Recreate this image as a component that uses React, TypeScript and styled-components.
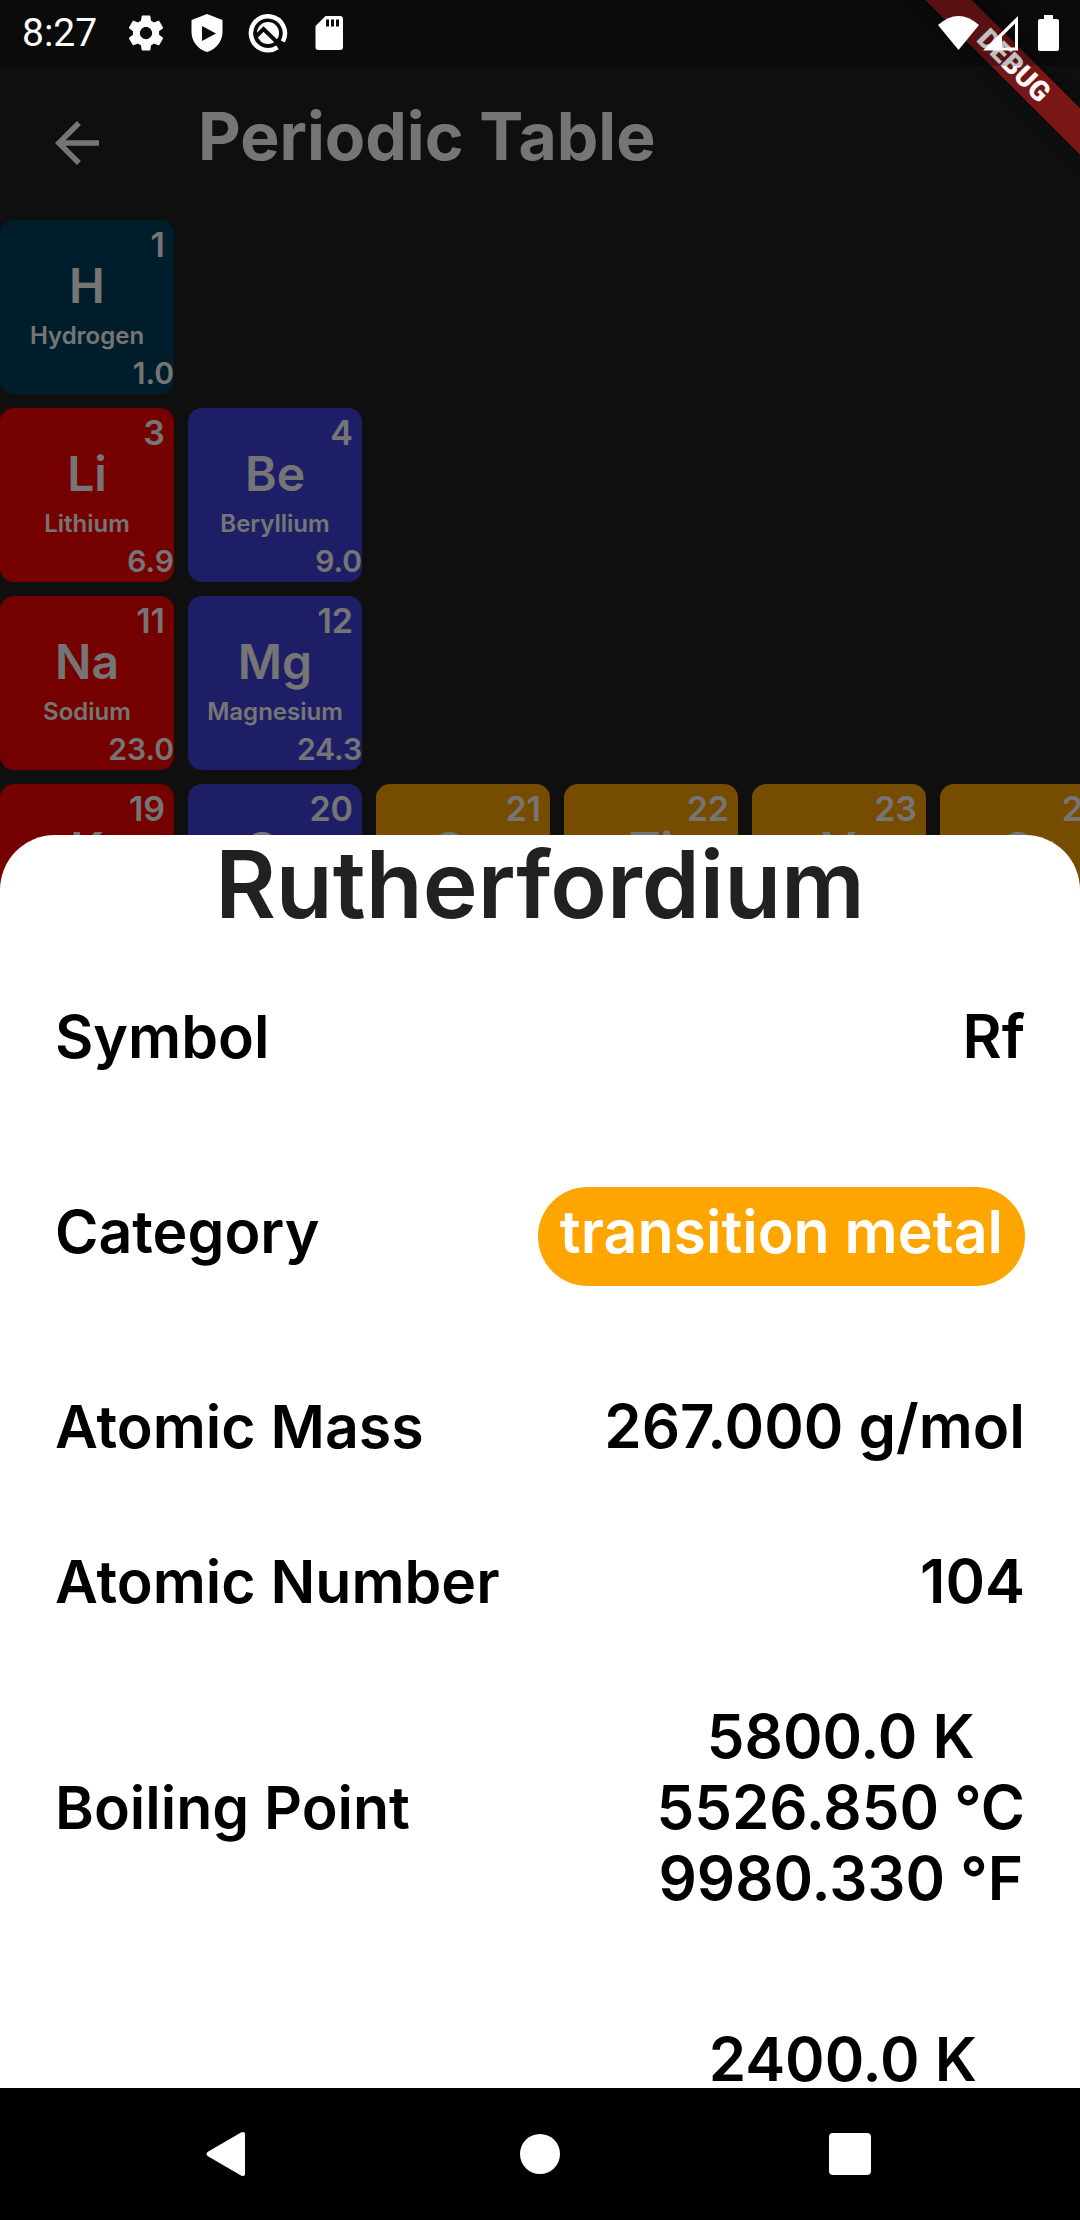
import React from "react";
import styled, { createGlobalStyle } from "styled-components";

const GlobalStyle = createGlobalStyle`
  *, *::before, *::after { box-sizing: border-box; }
  body { margin: 0; background: #000; }
  button { margin: 0; padding: 0; border: 0; background: none; color: inherit; font: inherit; cursor: pointer; }
`;

const Screen = styled.div`
  position: relative;
  display: flex;
  flex-direction: column;
  height: 100vh;
  overflow: hidden;
  background: #212121;
  color: #fff;
  font-family: Inter, "Liberation Sans", sans-serif;
  font-weight: 600;
`;

const Body = styled.main`
  position: relative;
  flex: 1;
  min-height: 0;
  padding-top: 66px;
  overflow: hidden;
`;

const AppBar = styled.header`
  display: flex;
  align-items: center;
  gap: 88px;
  height: 154px;
  padding: 0 44px;
`;

const BackButton = styled.button`
  display: flex;
  width: 66px;
  height: 66px;
`;

const PageTitle = styled.h1`
  margin: 0;
  padding-bottom: 14px;
  font-size: 66px;
  font-weight: 700;
  line-height: 80px;
  white-space: nowrap;
`;

const Table = styled.div`
  display: grid;
  grid-template-columns: repeat(6, 174px);
  grid-auto-rows: 174px;
  gap: 14px;
`;

const Tile = styled.button<{ $row: number; $col: number; $color: string }>`
  grid-row: ${(p) => p.$row};
  grid-column: ${(p) => p.$col};
  display: flex;
  flex-direction: column;
  align-items: center;
  padding-top: 8px;
  border-radius: 14px;
  background: ${(p) => p.$color};
`;

const TileNumber = styled.span`
  align-self: flex-end;
  padding-right: 9px;
  font-size: 34px;
  line-height: 34px;
`;

const TileSymbol = styled.span`
  font-size: 48px;
  line-height: 48px;
`;

const TileName = styled.span`
  margin-top: 11px;
  font-size: 24px;
  line-height: 30px;
`;

const TileMass = styled.span`
  align-self: flex-end;
  margin-top: 7px;
  font-size: 30px;
  line-height: 30px;
`;

const Scrim = styled.div`
  position: absolute;
  inset: 0;
  background: rgba(0, 0, 0, 0.54);
`;

const Sheet = styled.section`
  position: absolute;
  right: 0;
  bottom: 0;
  left: 0;
  height: 60%;
  overflow-y: auto;
  scrollbar-width: none;
  border-radius: 55px 55px 0 0;
  background: #fff;
  color: #000;
`;

const SheetTitle = styled.h2`
  margin: 0 0 68px;
  color: #212121;
  font-size: 93px;
  font-weight: 600;
  line-height: 98px;
  text-align: center;
`;

const Facts = styled.dl`
  display: flex;
  flex-direction: column;
  gap: 84px;
  margin: 0;
  padding: 0 55px 84px;
  font-size: 59px;
  line-height: 71px;
`;

const Fact = styled.div<{ $kind?: "badge" | "multi" }>`
  display: flex;
  align-items: ${(p) => (p.$kind === "badge" ? "baseline" : "center")};
  justify-content: space-between;
  padding: ${(p) => (p.$kind === "badge" ? "31px 0 21px" : p.$kind === "multi" ? "0 0 26px" : "0")};
`;

const FactName = styled.dt`
  white-space: nowrap;
`;

const FactValue = styled.dd`
  margin: 0;
  font-size: 60px;
  text-align: center;
  white-space: pre-line;
`;

const Badge = styled.dd`
  margin: 0;
  padding: 9px 22px 19px;
  border-radius: 50px;
  background: #ffa500;
  color: #fff;
  white-space: nowrap;
`;

const DebugRibbon = styled.div`
  position: absolute;
  top: 49px;
  right: -54px;
  width: 240px;
  height: 33px;
  transform: rotate(45deg);
  background: rgba(183, 28, 28, 0.63);
  box-shadow: 0 0 16px rgba(0, 0, 0, 0.5);
  font-family: Roboto, sans-serif;
  font-size: 28px;
  font-weight: 900;
  line-height: 33px;
  text-align: center;
`;

const StatusBar = styled.div`
  position: absolute;
  top: 0;
  right: 0;
  left: 0;
  display: flex;
  align-items: center;
  justify-content: space-between;
  height: 66px;
  padding: 0 21px 0 22px;
  background: rgba(0, 0, 0, 0.25);
`;

const StatusGroup = styled.div<{ $gap: number }>`
  display: flex;
  align-items: center;
  gap: ${(p) => p.$gap}px;
`;

const Clock = styled.time`
  width: 84px;
  font-family: Roboto, sans-serif;
  font-size: 39px;
  font-weight: 400;
  line-height: 44px;
`;

const NavBar = styled.nav`
  display: grid;
  grid-template-columns: repeat(3, 1fr);
  height: 132px;
  padding: 0 75px;
  background: #000;
`;

const NavButton = styled.button`
  display: flex;
  align-items: center;
  justify-content: center;
`;

const RED = "#ff0000";
const BLUE = "#4343e0";
const ORANGE = "#ffa500";

type ElementInfo = {
  row: number;
  col: number;
  number: number;
  symbol: string;
  name?: string;
  mass?: string;
  color: string;
};

const elements: ElementInfo[] = [
  { row: 1, col: 1, number: 1, symbol: "H", name: "Hydrogen", mass: "1.0", color: "#003f5f" },
  { row: 2, col: 1, number: 3, symbol: "Li", name: "Lithium", mass: "6.9", color: RED },
  { row: 2, col: 2, number: 4, symbol: "Be", name: "Beryllium", mass: "9.0", color: BLUE },
  { row: 3, col: 1, number: 11, symbol: "Na", name: "Sodium", mass: "23.0", color: RED },
  { row: 3, col: 2, number: 12, symbol: "Mg", name: "Magnesium", mass: "24.3", color: BLUE },
  { row: 4, col: 1, number: 19, symbol: "K", color: RED },
  { row: 4, col: 2, number: 20, symbol: "Ca", color: BLUE },
  { row: 4, col: 3, number: 21, symbol: "Sc", color: ORANGE },
  { row: 4, col: 4, number: 22, symbol: "Ti", color: ORANGE },
  { row: 4, col: 5, number: 23, symbol: "V", color: ORANGE },
  { row: 4, col: 6, number: 24, symbol: "Cr", color: ORANGE },
];

const GearIcon = () => (
  <svg width="42" height="42" viewBox="0 0 24 24" fill="#fff" aria-hidden="true">
    <path d="M19.43 12.98c.04-.32.07-.64.07-.98s-.03-.66-.07-.98l2.11-1.65c.19-.15.24-.42.12-.64l-2-3.46c-.12-.22-.39-.3-.61-.22l-2.49 1c-.52-.4-1.08-.73-1.69-.98l-.38-2.65C14.46 2.18 14.25 2 14 2h-4c-.25 0-.46.18-.49.42l-.38 2.65c-.61.25-1.17.59-1.69.98l-2.49-1c-.23-.09-.49 0-.61.22l-2 3.46c-.13.22-.07.49.12.64l2.11 1.65c-.04.32-.07.65-.07.98s.03.66.07.98l-2.11 1.65c-.19.15-.24.42-.12.64l2 3.46c.12.22.39.3.61.22l2.49-1c.52.4 1.08.73 1.69.98l.38 2.65c.03.24.24.42.49.42h4c.25 0 .46-.18.49-.42l.38-2.65c.61-.25 1.17-.59 1.69-.98l2.49 1c.23.09.49 0 .61-.22l2-3.46c.12-.22.07-.49-.12-.64l-2.11-1.65zM12 15.5c-1.93 0-3.5-1.57-3.5-3.5s1.57-3.5 3.5-3.5 3.5 1.57 3.5 3.5-1.57 3.5-3.5 3.5z" />
  </svg>
);

const ShieldIcon = () => (
  <svg width="42" height="42" viewBox="0 0 42 42" fill="#fff" fillRule="evenodd" aria-hidden="true">
    <path d="M21 2 36.500 8v12c0 9-6 17-15.500 20C11.500 37 5.500 29 5.500 20V8ZM16 14v15l14-7.500Z" />
  </svg>
);

const CompassIcon = () => (
  <svg width="42" height="42" viewBox="0 0 42 42" fill="none" aria-hidden="true">
    <path d="M30.500 35.300A17 17 0 1 1 35.800 29.500" stroke="#fff" strokeWidth="4.500" />
    <circle cx="21" cy="21" r="11" fill="#fff" />
    <path d="M8 25.500 16.500 17 34 34" stroke="#0b0b0b" strokeWidth="4" />
    <path d="M29.500 28.500 35 34" stroke="#0b0b0b" strokeWidth="4" />
  </svg>
);

const SdCardIcon = () => (
  <svg width="42" height="42" viewBox="0 0 42 42" fill="#fff" fillRule="evenodd" aria-hidden="true">
    <path d="M17.500 4H32q3 0 3 3v28q0 3-3 3H10.500q-3 0-3-3V14ZM18 7.500v7h3v-7ZM23 7.500v7h3v-7ZM28 7.500v7h3v-7Z" />
  </svg>
);

const WifiIcon = () => (
  <svg width="41" height="36" viewBox="0 0 41 36" fill="#fff" aria-hidden="true">
    <path d="M0 10Q20.500-8 41 10L20.500 35Z" />
  </svg>
);

const SignalIcon = () => (
  <svg width="36" height="36" viewBox="0 0 36 36" fill="#fff" fillRule="evenodd" aria-hidden="true">
    <path d="M0 35.500 35 1v34.500ZM32 8.500 19 21.500v11h13Z" />
  </svg>
);

const BatteryIcon = () => (
  <svg width="21" height="36" viewBox="0 0 21 36" fill="#fff" aria-hidden="true">
    <path d="M6 0h9v4h4q2 0 2 2v28q0 2-2 2H2q-2 0-2-2V6q0-2 2-2h4Z" />
  </svg>
);

export default function App() {
  return (
    <>
      <GlobalStyle />
      <Screen>
        <Body>
          <AppBar>
            <BackButton aria-label="Back">
              <svg width="66" height="66" viewBox="0 0 24 24" fill="#fff" aria-hidden="true">
                <path d="M20 11H7.830l5.590-5.590L12 4l-8 8 8 8 1.410-1.410L7.830 13H20v-2z" />
              </svg>
            </BackButton>
            <PageTitle>Periodic Table</PageTitle>
          </AppBar>
          <Table>
            {elements.map((e) => (
              <Tile key={e.number} $row={e.row} $col={e.col} $color={e.color}>
                <TileNumber>{e.number}</TileNumber>
                <TileSymbol>{e.symbol}</TileSymbol>
                {e.name && <TileName>{e.name}</TileName>}
                {e.mass && <TileMass>{e.mass}</TileMass>}
              </Tile>
            ))}
          </Table>
          <Scrim />
          <Sheet aria-labelledby="sheet-title">
            <SheetTitle id="sheet-title">Rutherfordium</SheetTitle>
            <Facts>
              <Fact>
                <FactName>Symbol</FactName>
                <FactValue>Rf</FactValue>
              </Fact>
              <Fact $kind="badge">
                <FactName>Category</FactName>
                <Badge>transition metal</Badge>
              </Fact>
              <Fact>
                <FactName>Atomic Mass</FactName>
                <FactValue>267.000 g/mol</FactValue>
              </Fact>
              <Fact>
                <FactName>Atomic Number</FactName>
                <FactValue>104</FactValue>
              </Fact>
              <Fact $kind="multi">
                <FactName>Boiling Point</FactName>
                <FactValue>{"5800.0 K\n5526.850 °C\n9980.330 °F"}</FactValue>
              </Fact>
              <Fact $kind="multi">
                <FactName>Melting Point</FactName>
                <FactValue>{"2400.0 K\n2126.850 °C\n3860.330 °F"}</FactValue>
              </Fact>
            </Facts>
          </Sheet>
        </Body>
        <NavBar aria-label="System">
          <NavButton aria-label="Back">
            <svg width="54" height="46" viewBox="0 0 54 46" fill="#fff" aria-hidden="true">
              <path d="M38 1.500Q42 0 42 3v40q0 3-4 1.500L4.500 25q-2-2 0-4Z" />
            </svg>
          </NavButton>
          <NavButton aria-label="Home">
            <svg width="40" height="40" viewBox="0 0 40 40" fill="#fff" aria-hidden="true">
              <circle cx="20" cy="20" r="20" />
            </svg>
          </NavButton>
          <NavButton aria-label="Recent apps">
            <svg width="42" height="42" viewBox="0 0 42 42" fill="#fff" aria-hidden="true">
              <rect width="42" height="42" rx="4" />
            </svg>
          </NavButton>
        </NavBar>
        <DebugRibbon>DEBUG</DebugRibbon>
        <StatusBar>
          <StatusGroup $gap={19}>
            <Clock>8:27</Clock>
            <GearIcon />
            <ShieldIcon />
            <CompassIcon />
            <SdCardIcon />
          </StatusGroup>
          <StatusGroup $gap={4}>
            <WifiIcon />
            <StatusGroup $gap={19}>
              <SignalIcon />
              <BatteryIcon />
            </StatusGroup>
          </StatusGroup>
        </StatusBar>
      </Screen>
    </>
  );
}
